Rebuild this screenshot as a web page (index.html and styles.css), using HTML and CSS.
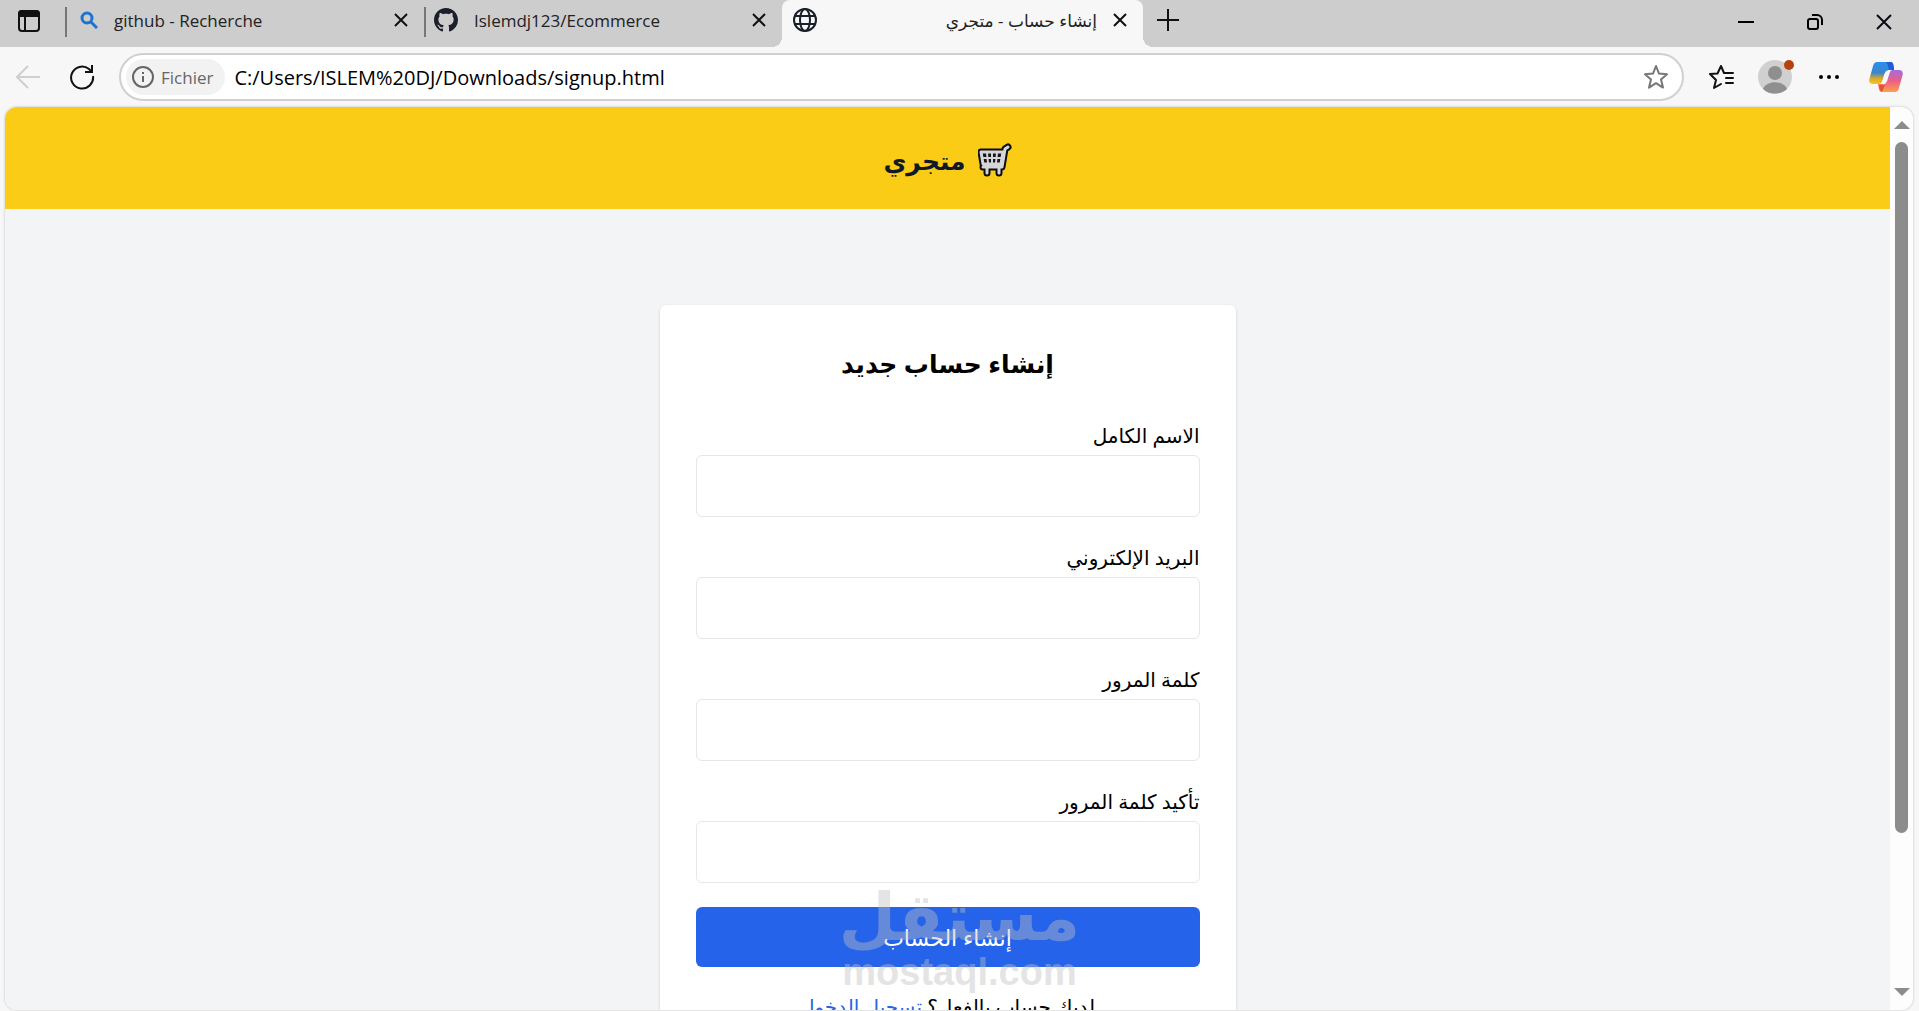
FILE: index.html
```
<!DOCTYPE html>
<html lang="ar">

<head>
    <meta charset="UTF-8">
    <meta name="viewport" content="width=device-width, initial-scale=1.0">
    <title>إنشاء حساب - متجري</title>
    <link rel="stylesheet" href="styles.css">
</head>

<body>
    <div class="tab-bar">
        <button class="icon-button tab-actions" aria-label="Onglets">
            <svg width="24" height="24" viewBox="0 0 24 24" fill="none" stroke="#111" stroke-width="2">
                <rect x="2" y="2" width="20" height="20" rx="3" />
                <path d="M2 5a3 3 0 0 1 3-3h14a3 3 0 0 1 3 3v2H2z" fill="#111" />
                <path d="M8 7v15" />
            </svg>
        </button>
        <div class="tab tab-search">
            <svg width="18" height="18" viewBox="0 0 18 18" fill="none" stroke="#1b74d1" stroke-width="3">
                <circle cx="7" cy="7" r="5" />
                <path d="M11 11l6 6" />
            </svg>
            <span class="tab-title">github - Recherche</span>
            <button class="icon-button" aria-label="Fermer">
                <svg width="14" height="14" viewBox="0 0 14 14" stroke="#111" stroke-width="2"><path d="M1 1l12 12M13 1L1 13" /></svg>
            </button>
        </div>
        <div class="tab tab-github">
            <svg width="24" height="24" viewBox="0 0 16 16" fill="#1b1f2b">
                <path d="M8 0C3.58 0 0 3.58 0 8c0 3.54 2.29 6.53 5.47 7.59.4.07.55-.17.55-.38 0-.19-.01-.82-.01-1.49-2.01.37-2.53-.49-2.69-.94-.09-.23-.48-.94-.82-1.13-.28-.15-.68-.52-.01-.53.63-.01 1.08.58 1.23.82.72 1.21 1.87.87 2.33.66.07-.52.28-.87.51-1.07-1.78-.2-3.64-.89-3.64-3.95 0-.87.31-1.59.82-2.15-.08-.2-.36-1.02.08-2.12 0 0 .67-.21 2.2.82.64-.18 1.32-.27 2-.27s1.36.09 2 .27c1.53-1.04 2.2-.82 2.2-.82.44 1.1.16 1.92.08 2.12.51.56.82 1.27.82 2.15 0 3.07-1.87 3.75-3.65 3.95.29.25.54.73.54 1.48 0 1.07-.01 1.93-.01 2.2 0 .21.15.46.55.38A8.01 8.01 0 0 0 16 8c0-4.42-3.58-8-8-8z" />
            </svg>
            <span class="tab-title">Islemdj123/Ecommerce</span>
            <button class="icon-button" aria-label="Fermer">
                <svg width="14" height="14" viewBox="0 0 14 14" stroke="#111" stroke-width="2"><path d="M1 1l12 12M13 1L1 13" /></svg>
            </button>
        </div>
        <div class="tab active">
            <svg width="24" height="24" viewBox="0 0 24 24" fill="none" stroke="#1b1f2b" stroke-width="2">
                <circle cx="12" cy="12" r="11" />
                <ellipse cx="12" cy="12" rx="5" ry="11" />
                <path d="M2 8h20M2 16h20" />
            </svg>
            <span class="tab-title" dir="rtl">إنشاء حساب - متجري</span>
            <button class="icon-button" aria-label="Fermer">
                <svg width="14" height="14" viewBox="0 0 14 14" stroke="#111" stroke-width="2"><path d="M1 1l12 12M13 1L1 13" /></svg>
            </button>
        </div>
        <button class="icon-button new-tab" aria-label="Nouvel onglet">
            <svg width="22" height="22" viewBox="0 0 22 22" stroke="#111" stroke-width="2"><path d="M11 0v22M0 11h22" /></svg>
        </button>
        <div class="window-controls">
            <button class="icon-button" aria-label="Réduire">
                <svg width="16" height="16" viewBox="0 0 16 16" stroke="#000" stroke-width="2"><path d="M0 8h16" /></svg>
            </button>
            <button class="icon-button" aria-label="Restaurer">
                <svg width="16" height="16" viewBox="0 0 16 16" fill="none" stroke="#000" stroke-width="2">
                    <rect x="1" y="5" width="10" height="10" rx="2" />
                    <path d="M5 1h5a5 5 0 0 1 5 5v5" />
                </svg>
            </button>
            <button class="icon-button" aria-label="Fermer la fenêtre">
                <svg width="16" height="16" viewBox="0 0 16 16" stroke="#0b0b18" stroke-width="2"><path d="M1 1l14 14M15 1L1 15" /></svg>
            </button>
        </div>
    </div>

    <div class="toolbar">
        <button class="icon-button" aria-label="Retour">
            <svg width="24" height="24" viewBox="0 0 24 24" fill="none" stroke="#cfcfcf" stroke-width="2"><path d="M24 12H1M12 1L1 12l11 11" /></svg>
        </button>
        <button class="icon-button reload" aria-label="Actualiser">
            <svg width="26" height="26" viewBox="0 0 26 26" fill="none" stroke="#111" stroke-width="2">
                <path d="M24 12a11 11 0 1 1-4-7l3 3" />
                <path d="M23 1v7h-7" />
            </svg>
        </button>
        <div class="address-bar">
            <button class="site-info">
                <svg width="22" height="22" viewBox="0 0 22 22" fill="none" stroke="#666" stroke-width="2">
                    <circle cx="11" cy="11" r="10" />
                    <path d="M11 10v6M11 6v2" />
                </svg>
                Fichier
            </button>
            <input class="url" type="text" aria-label="Adresse" value="C:/Users/ISLEM%20DJ/Downloads/signup.html">
            <button class="icon-button" aria-label="Ajouter aux favoris">
                <svg width="26" height="26" viewBox="0 0 26 26" fill="none" stroke="#777" stroke-width="2" stroke-linejoin="round">
                    <path d="M13 2l3 7.600 8 .6-6 5.400 2 8-7-4.400-7 4.400 2-8-6-5.400 8-.6z" />
                </svg>
            </button>
        </div>
        <button class="icon-button" aria-label="Favoris">
            <svg width="26" height="26" viewBox="0 0 26 26" fill="none" stroke="#111" stroke-width="2" stroke-linejoin="round" stroke-linecap="round">
                <path d="M16 9l-3-7-3.500 7.500L2 10l6 6-2 8 7-4M16 9h9M18 14h7M18 19h7" />
            </svg>
        </button>
        <button class="icon-button profile" aria-label="Profil">
            <svg width="34" height="34" viewBox="0 0 34 34">
                <circle cx="17" cy="17" r="17" fill="#d0d0d0" />
                <circle cx="17" cy="13" r="7" fill="#8f8f8f" />
                <path d="M5 29c3-9 21-9 24 0-6 6-18 6-24 0z" fill="#8f8f8f" />
            </svg>
            <span class="badge"></span>
        </button>
        <button class="icon-button more" aria-label="Paramètres">
            <svg width="20" height="20" viewBox="0 0 20 20"><circle cx="2" cy="10" r="2" /><circle cx="10" cy="10" r="2" /><circle cx="18" cy="10" r="2" /></svg>
        </button>
        <button class="icon-button copilot" aria-label="Copilot">
            <svg width="34" height="32" viewBox="0 0 34 32">
                <defs>
                    <linearGradient id="left" x1="0" y1="0" x2="0" y2="1">
                        <stop offset="0" stop-color="#2b8ff0" />
                        <stop offset=".5" stop-color="#3b86c8" />
                        <stop offset=".75" stop-color="#d8a92c" />
                        <stop offset="1" stop-color="#fcc419" />
                    </linearGradient>
                    <linearGradient id="right" x1="0" y1="0" x2="0" y2="1">
                        <stop offset="0" stop-color="#a56be0" />
                        <stop offset=".5" stop-color="#ec5f86" />
                        <stop offset="1" stop-color="#fda04b" />
                    </linearGradient>
                </defs>
                <path d="M8 1h13c3 0 3 2 4 8h-4c-4 0-5 2-6 6l-2 6c-1 2-2 2-4 2H4c-3 0-5-2-3-7L4 5c1-3 2-4 4-4z" fill="url(#left)" />
                <path d="M17 1h5c2 0 3 3 3 8h-5c-1-4-1-6-3-8z" fill="#205bd8" />
                <path d="M26 31H13c-3 0-3-2-4-8h4c4 0 5-2 6-6l2-6c1-2 2-2 4-2h5c3 0 5 2 3 7l-3 11c-1 3-2 4-4 4z" fill="url(#right)" />
                <path d="M16 12h4l-4 11h-4c2-3 2-7 4-11z" fill="#f7f7f7" />
                <path d="M12 24h4l-3 7c-2-1-3-3-3-7z" fill="#e2552f" />
            </svg>
        </button>
    </div>

    <div class="viewport">
        <div class="page" dir="rtl">
            <header class="header">
                <svg width="34" height="34" viewBox="0 0 34 34" fill="none" stroke-linejoin="round" stroke-linecap="round">
                    <path d="M30 4l-3 2-3 18H5M3 9h22l-2 12H5z M9 25v5 M21 25v5" stroke="#0d0d12" stroke-width="7" />
                    <path d="M3 9h22l-2 12H5z" fill="#15151a" />
                    <path d="M30 4l-3 2-3 18H5M3 9h22l-2 12H5z M9 25v5 M21 25v5" stroke="#d6d6d8" stroke-width="3" />
                    <path d="M5 15h18M9 10l1 10M14 10v10M19 10l-1 10" stroke="#d6d6d8" stroke-width="2" />
                </svg>
                <h1>متجري</h1>
            </header>

            <main class="card">
                <h2>إنشاء حساب جديد</h2>
                <form>
                    <div class="field">
                        <label for="name">الاسم الكامل</label>
                        <input type="text" id="name">
                    </div>
                    <div class="field">
                        <label for="email">البريد الإلكتروني</label>
                        <input type="email" id="email">
                    </div>
                    <div class="field">
                        <label for="password">كلمة المرور</label>
                        <input type="password" id="password">
                    </div>
                    <div class="field">
                        <label for="confirm">تأكيد كلمة المرور</label>
                        <input type="password" id="confirm">
                    </div>
                    <button class="submit" type="submit">إنشاء الحساب</button>
                </form>
                <p class="login">لديك حساب بالفعل؟ <a href="#">تسجيل الدخول</a></p>
            </main>
        </div>
        <div class="scrollbar">
            <span class="arrow-up"></span>
            <span class="track"><span class="thumb"></span></span>
            <span class="arrow-down"></span>
        </div>
    </div>

    <div class="watermark">
        <span class="watermark-name" dir="rtl">مستقل</span>
        <span class="watermark-site">mostaql.com</span>
    </div>
</body>

</html>
```
FILE: styles.css
```
* {
    box-sizing: border-box;
}

body {
    margin: 0;
    height: 100vh;
    display: flex;
    flex-direction: column;
    overflow: hidden;
    background-color: #f7f7f7;
    font-family: "Open Sans", "DejaVu Sans", sans-serif;
}

button,
input {
    font-family: inherit;
}

svg {
    display: block;
    flex-shrink: 0;
}

.icon-button {
    padding: 0;
    border: none;
    background: none;
    cursor: pointer;
}

/* tabs */
.tab-bar {
    display: flex;
    height: 47px;
    background-color: #cdcdcd;
}

.tab-actions {
    padding: 0 24px 6px 17px;
}

.tab {
    display: flex;
    align-items: center;
    height: 47px;
    padding: 0 16px 7px 8px;
    font-size: 17px;
    color: #222;
}

.tab-search,
.tab-github {
    background: linear-gradient(#777, #777) 0 7px / 2px 30px no-repeat;
}

.tab-search {
    width: 359px;
    padding-left: 15px;
}

.tab-github {
    width: 358px;
    padding-left: 10px;
}

.tab-title {
    flex: 1;
    margin: 0 16px;
    white-space: nowrap;
}

.tab.active {
    position: relative;
    width: 361px;
    padding-left: 11px;
    background-color: #f7f7f7;
    border-radius: 8px 8px 0 0;
}

.tab.active::before,
.tab.active::after {
    content: "";
    position: absolute;
    bottom: 0;
    width: 10px;
    height: 10px;
}

.tab.active::before {
    right: 100%;
    background: radial-gradient(circle at 0 0, transparent 10px, #f7f7f7 10px);
}

.tab.active::after {
    left: 100%;
    background: radial-gradient(circle at 100% 0, transparent 10px, #f7f7f7 10px);
}

.new-tab {
    padding: 0 0 8px 14px;
}

.window-controls {
    display: flex;
    gap: 53px;
    margin-left: auto;
    padding: 0 27px 4px 0;
}

/* address bar */
.toolbar {
    display: flex;
    align-items: center;
    gap: 24px;
    height: 60px;
    padding: 0 16px;
}

.reload {
    margin-left: 5px;
}

.address-bar {
    flex: 1;
    display: flex;
    align-items: center;
    gap: 9px;
    height: 48px;
    padding: 0 13px 0 5px;
    border: 2px solid #d0d0d0;
    border-radius: 24px;
    background-color: #fff;
}

.site-info {
    display: flex;
    align-items: center;
    gap: 7px;
    height: 36px;
    padding: 0 12px 0 6px;
    border: none;
    border-radius: 18px;
    background-color: #f2f2f2;
    font-size: 17px;
    font-weight: 500;
    color: #666;
}

.url {
    flex: 1;
    padding: 0;
    border: none;
    outline: none;
    font-size: 20px;
    color: #000;
}

.profile {
    position: relative;
}

.badge {
    position: absolute;
    top: 0;
    right: -2px;
    width: 10px;
    height: 10px;
    border-radius: 50%;
    background-color: #b5430f;
}

.more {
    padding: 0 3px;
}

.copilot {
    margin-left: 3px;
}

/* page */
.viewport {
    flex: 1;
    display: flex;
    min-height: 0;
    margin: 0 6px 1px 5px;
    border-radius: 12px;
    overflow: hidden;
    background-color: #fdfdfd;
    box-shadow: 0 0 2px 1px #ddd;
}

.page {
    flex: 1;
    overflow: hidden;
    background-color: #f3f4f6;
}

.header {
    display: flex;
    justify-content: center;
    align-items: center;
    gap: 12px;
    height: 102px;
    padding-top: 4px;
    background-color: #facc15;
    color: #111827;
}

.header h1 {
    margin: 0;
    font-size: 25px;
    line-height: 36px;
}

.card {
    max-width: 576px;
    margin: 96px auto 0;
    padding: 36px;
    border-radius: 6px;
    background-color: #fff;
    box-shadow: 0 1px 3px rgba(0, 0, 0, 0.16);
}

.card h2 {
    margin: 0 0 38px;
    font-size: 25px;
    line-height: 44px;
    text-align: center;
}

.field {
    margin-bottom: 28px;
}

.field:last-of-type {
    margin-bottom: 24px;
}

.field label {
    display: block;
    margin-bottom: 6px;
    font-size: 20px;
    line-height: 26px;
    font-weight: 500;
}

.field input {
    display: block;
    width: 100%;
    height: 62px;
    padding: 0 18px;
    border: 1px solid #e5e7eb;
    border-radius: 6px;
    font-size: 20px;
}

.submit {
    display: block;
    width: 100%;
    height: 60px;
    border: none;
    border-radius: 6px;
    background-color: #2563eb;
    color: #fff;
    font-size: 22px;
    cursor: pointer;
}

.login {
    margin: 22px 0 0;
    font-size: 20px;
    line-height: 36px;
    text-align: center;
}

.login a {
    color: #2563eb;
    text-decoration: none;
}

.scrollbar {
    display: flex;
    flex-direction: column;
    align-items: center;
    width: 23px;
    padding: 14px 0;
}

.arrow-up,
.arrow-down {
    border: 8px solid transparent;
}

.arrow-up {
    border-top: 0;
    border-bottom-color: #8c8c8c;
}

.arrow-down {
    border-bottom: 0;
    border-top-color: #8c8c8c;
}

.track {
    flex: 1;
    width: 13px;
    padding: 13px 0;
}

.thumb {
    display: block;
    height: 83%;
    border-radius: 7px;
    background-color: #8c8c8c;
}

/* watermark lies over the form */
.watermark {
    position: absolute;
    bottom: 20px;
    left: 50%;
    width: 232px;
    margin-left: -116px;
    display: flex;
    flex-direction: column;
    align-items: center;
    font-weight: bold;
    color: #c0c0c0;
    opacity: 0.42;
    pointer-events: none;
}

.watermark-name {
    font-family: "DejaVu Sans", sans-serif;
    font-size: 66px;
    line-height: 70px;
}

.watermark-site {
    font-family: "Liberation Sans", sans-serif;
    font-size: 38px;
    line-height: 38px;
}
```
